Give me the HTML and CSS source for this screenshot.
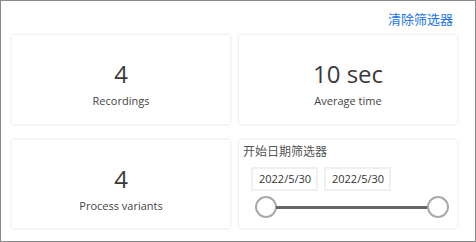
FILE: index.html
```html
<!doctype html>
<html lang="zh-Hans">
<head>
<meta charset="utf-8">
<meta name="viewport" content="width=device-width,initial-scale=1">
<title>Recordings</title>
<link rel="stylesheet" href="styles.css">
</head>
<body>
<div class="frame">
  <div class="topbar"><a class="clear" href="#">清除筛选器</a></div>
  <div class="grid">
    <div class="card">
      <div class="value">4</div>
      <div class="label">Recordings</div>
    </div>
    <div class="card">
      <div class="value">10 sec</div>
      <div class="label">Average time</div>
    </div>
    <div class="card">
      <div class="value">4</div>
      <div class="label">Process variants</div>
    </div>
    <div class="card slicer">
      <div class="title">开始日期筛选器</div>
      <div class="dates">
        <span class="date">2022/5/30</span>
        <span class="date">2022/5/30</span>
      </div>
      <div class="range">
        <span class="knob"></span>
        <span class="track"></span>
        <span class="knob"></span>
      </div>
    </div>
  </div>
</div>
</body>
</html>
```

FILE: styles.css
```css
:root{--text:#333;--muted:#555;--line:#ececec;--blue:#1a73e8}
*{box-sizing:border-box}
body{margin:0;background:#fff;color:var(--text);font-family:"Open Sans","Noto Sans CJK SC",sans-serif}
.frame{width:476px;height:242px;border:1px solid #8a8a8a;padding:0 18px 0 11px}
.topbar{display:flex;justify-content:flex-end;height:34px;padding:9px 4px 0 0}
.clear{color:var(--blue);text-decoration:none;font-family:"Noto Sans CJK SC",sans-serif;font-size:13px;line-height:18px}
.grid{display:grid;grid-template-columns:218px 218px;grid-template-rows:89px 88px;column-gap:9px;row-gap:16px}
.card{background:#fff;box-shadow:0 0 3px rgba(0,0,0,.14);display:flex;flex-direction:column;align-items:center;padding-top:23px}
.value{font-size:24px;line-height:32px;font-weight:400;color:#3a3a3a}
.label{font-size:11px;line-height:16px;margin-top:3px;color:#444}
.slicer{align-items:stretch;padding:3px 8px 0 4px}
.title{font-family:"Noto Sans CJK SC",sans-serif;font-size:12px;line-height:16px;color:var(--muted)}
.dates{display:flex;gap:6px;margin:8px 0 0 8px}
.date{border:2px solid #f0f0f0;font-size:11px;line-height:20px;padding:0 6px;color:#333;width:67px}
.range{display:flex;align-items:center;margin-top:5px;padding-left:12px}
.knob{width:22px;height:22px;border:2px solid #aaa;border-radius:50%;background:#fff;flex:none}
.track{flex:1;height:3px;background:#666;margin:0 -1px}
```
